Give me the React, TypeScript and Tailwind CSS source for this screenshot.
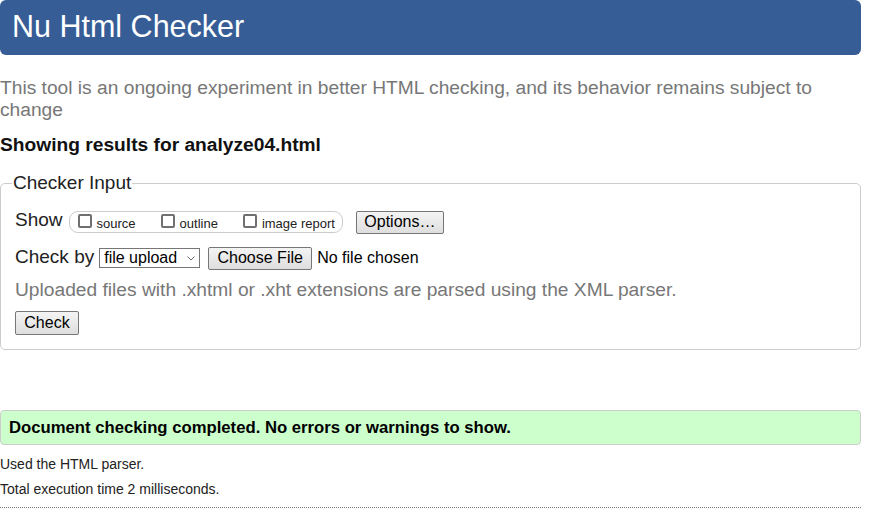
export default function App() {
  const btn =
    "flex items-center justify-center border border-[#767676] rounded-[2px] bg-gradient-to-b from-[#f4f4f4] to-[#dedede] text-[16px] text-black";

  return (
    <div className="w-[861px] bg-white text-[#222] font-['Liberation_Sans',Arial,sans-serif]">
      <div className="h-[55px] rounded-[6px] bg-[#365d96] flex items-center pl-[12px] pb-[2px]">
        <h1 className="text-[30.5px] text-white">Nu Html Checker</h1>
      </div>

      <p className="mt-[22px] text-[19.2px] leading-[22px] text-[#777]">
        This tool is an ongoing experiment in better HTML checking, and its behavior remains subject to change
      </p>

      <p className="mt-[13px] text-[19.2px] leading-[22px] font-bold text-[#111]">
        Showing results for analyze04.html
      </p>

      <fieldset className="mt-[16px] border border-[#cccccc] rounded-[5px]">
        <legend className="ml-[11px] px-px text-[19px] leading-[22px]">Checker Input</legend>
        <div className="pl-[14px] pt-[15px] pb-[14px]">
          <div className="flex items-center">
            <span className="text-[19px] leading-[22px] mb-[4px]">Show</span>
            <div className="ml-[6px] h-[22px] flex items-center gap-[25px] pl-[8px] pr-[7px] border border-[#cccccc] rounded-[9px]">
              {["source", "outline", "image report"].map((l) => (
                <div key={l} className="flex items-center">
                  <span className="w-[14px] h-[14px] mb-[2px] border-2 border-[#707070] rounded-[2px] bg-white" />
                  <span className="ml-[5px] mt-[2px] text-[13px] leading-[15px]">{l}</span>
                </div>
              ))}
            </div>
            <button className={`${btn} ml-[13px] w-[88px] h-[23px] text-[15.5px]`}>Options…</button>
          </div>

          <div className="mt-[11px] flex items-center">
            <span className="text-[19px] leading-[22px] mb-[2px]">Check by</span>
            <div className="ml-[5px] w-[101px] h-[20px] border border-[#767676] bg-white flex items-center justify-between pl-[4px] pr-[4px]">
              <span className="text-[16px] leading-[18px] text-black">file upload</span>
              <svg width="8" height="5" viewBox="0 0 8 5">
                <polyline points="0.5,0.5 4,4 7.5,0.5" fill="none" stroke="#6d6d6d" strokeWidth="1" />
              </svg>
            </div>
            <button className={`${btn} ml-[8px] w-[104px] h-[23px]`}>Choose File</button>
            <span className="ml-[5px] text-[16px] text-black">No file chosen</span>
          </div>

          <p className="mt-[9px] text-[19.2px] leading-[22px] text-[#777]">
            Uploaded files with .xhtml or .xht extensions are parsed using the XML parser.
          </p>

          <button className={`${btn} mt-[10px] w-[64px] h-[24px]`}>Check</button>
        </div>
      </fieldset>

      <div className="mt-[60px] h-[35px] border border-[#cccccc] rounded-[4px] bg-[#ccffcc] flex items-center pl-[8px]">
        <span className="text-[16.7px] font-bold text-black">
          Document checking completed. No errors or warnings to show.
        </span>
      </div>

      <div className="mt-[7px] text-[14px] leading-[25px]">
        <p>Used the HTML parser.</p>
        <p>Total execution time 2 milliseconds.</p>
      </div>

      <div className="mt-[5px] border-t border-dotted border-[#777]" />
    </div>
  );
}
